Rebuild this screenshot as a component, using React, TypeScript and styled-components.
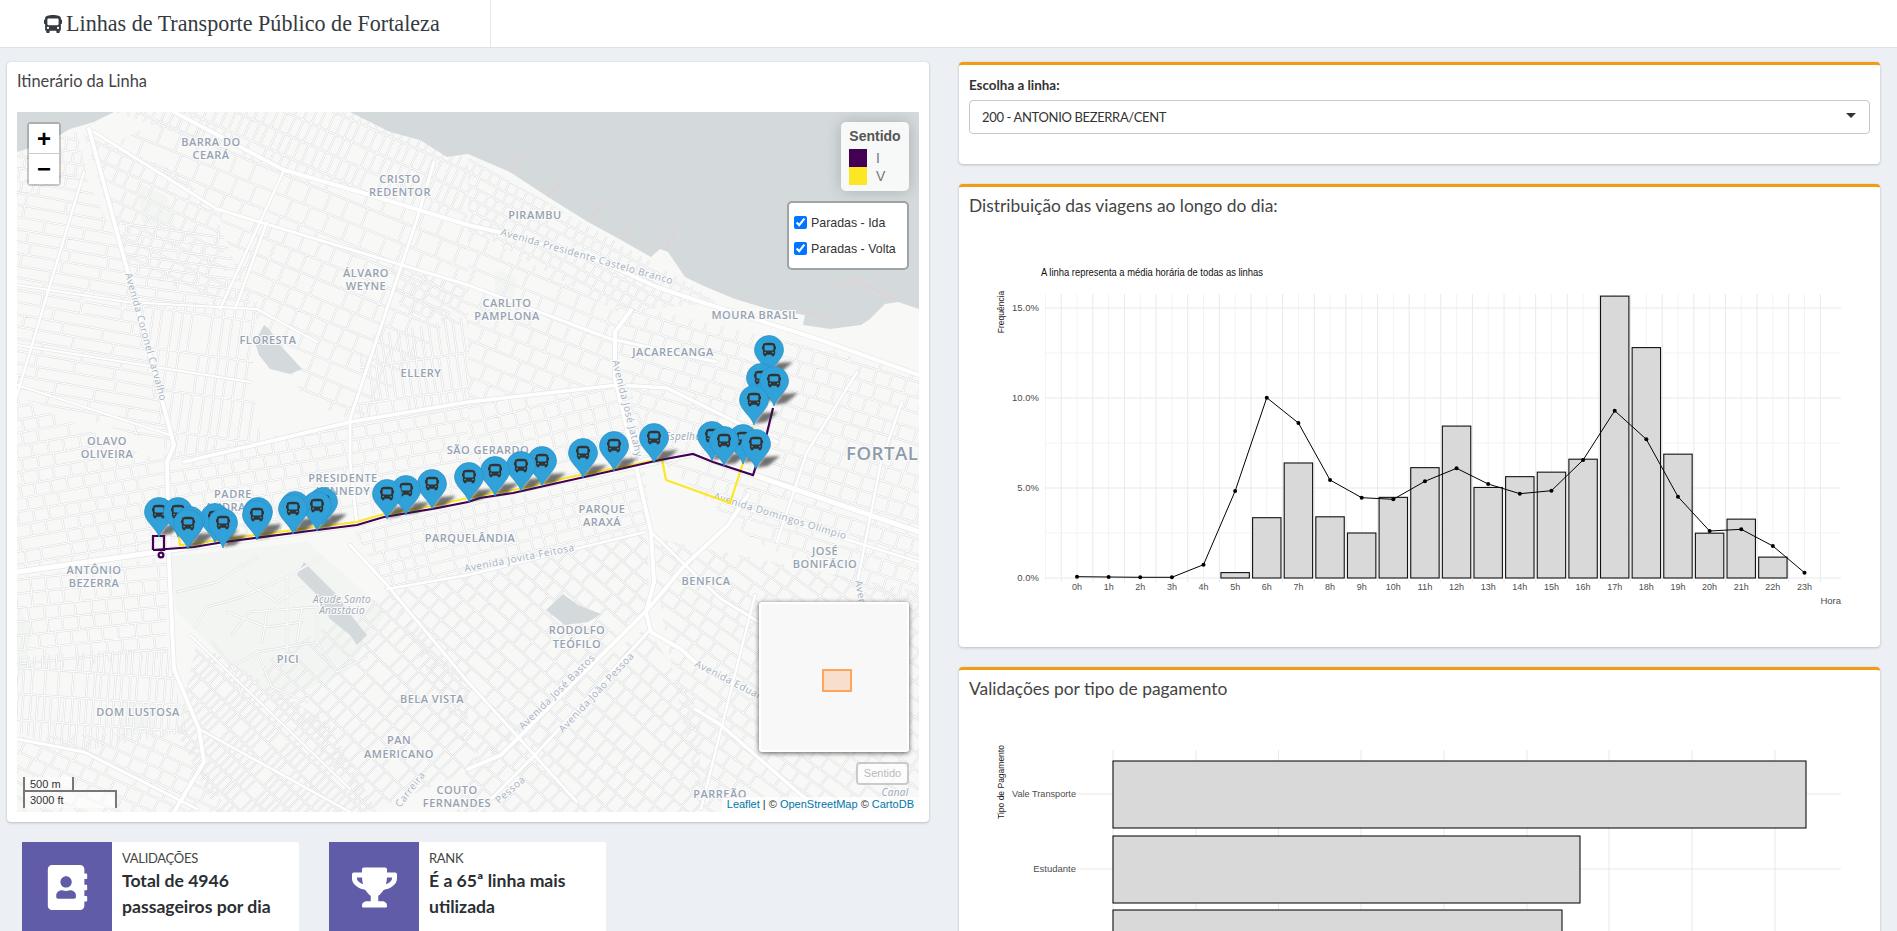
import styled, { createGlobalStyle } from "styled-components";
import { FaAddressBook, FaBus, FaTrophy } from "react-icons/fa";

type Pt = [number, number];

interface District {
  poly: Pt[];
  angle: number;
  sx: number;
  sy: number;
}

// bairros do mapa base: poligono, direcao das ruas e tamanho das quadras
const districts: District[] = [
  { poly: [[0, 40], [60, 20], [70, 60], [0, 85]], angle: 8, sx: 10, sy: 12 },
  { poly: [[0, 70], [67, 60], [112, 157], [155, 335], [0, 285]], angle: 10, sx: 40, sy: 12 },
  { poly: [[67, 20], [160, 60], [200, 100], [215, 190], [110, 160]], angle: 25, sx: 13, sy: 15 },
  { poly: [[105, 110], [205, 120], [235, 195], [110, 195]], angle: 8, sx: 30, sy: 10 },
  { poly: [[115, 190], [240, 190], [235, 270], [245, 330], [150, 345]], angle: 8, sx: 10, sy: 40 },
  { poly: [[97, 0], [333, 0], [451, 47], [451, 115], [267, 58], [157, 20]], angle: 24, sx: 9, sy: 20 },
  { poly: [[160, 0], [267, 58], [451, 115], [451, 175], [200, 97], [100, 30]], angle: 22, sx: 20, sy: 20 },
  { poly: [[200, 97], [451, 175], [400, 250], [340, 310], [290, 290], [230, 190]], angle: 22, sx: 17, sy: 18 },
  { poly: [[370, 150], [451, 175], [451, 215], [385, 200]], angle: 30, sx: 11, sy: 11 },
  { poly: [[345, 225], [451, 205], [451, 290], [338, 312]], angle: -8, sx: 8, sy: 36 },
  { poly: [[130, 345], [340, 310], [451, 290], [451, 385], [140, 440], [0, 460], [0, 285]], angle: -10, sx: 16, sy: 13 },
  { poly: [[451, 45], [660, 165], [700, 190], [600, 200], [451, 115]], angle: 28, sx: 10, sy: 11 },
  { poly: [[451, 115], [600, 200], [600, 270], [451, 290]], angle: 22, sx: 18, sy: 17 },
  { poly: [[451, 290], [610, 270], [640, 345], [451, 390]], angle: -14, sx: 15, sy: 15 },
  { poly: [[600, 190], [902, 260], [902, 500], [738, 430], [640, 345], [600, 270]], angle: 17, sx: 16, sy: 15 },
  { poly: [[0, 465], [150, 445], [150, 545], [0, 560]], angle: -6, sx: 16, sy: 14 },
  { poly: [[0, 545], [150, 535], [170, 620], [60, 640], [0, 620]], angle: 4, sx: 7, sy: 26 },
  { poly: [[0, 625], [170, 620], [210, 700], [0, 700]], angle: 24, sx: 16, sy: 14 },
  { poly: [[180, 530], [310, 610], [360, 700], [200, 700], [160, 620]], angle: 44, sx: 7, sy: 17 },
  { poly: [[240, 555], [370, 480], [451, 570], [451, 660], [350, 700]], angle: 44, sx: 11, sy: 19 },
  { poly: [[335, 415], [628, 360], [634, 420], [370, 478]], angle: -14, sx: 13, sy: 12 },
  { poly: [[370, 478], [630, 420], [632, 495], [484, 643], [451, 640]], angle: 42, sx: 15, sy: 15 },
  { poly: [[451, 650], [630, 515], [682, 600], [684, 700], [440, 700]], angle: 42, sx: 13, sy: 17 },
  { poly: [[632, 425], [902, 480], [902, 700], [684, 700], [650, 530]], angle: 36, sx: 16, sy: 14 },
];

const mulberry = (seed: number) => () => {
  seed = (seed + 0x6d2b79f5) | 0;
  let t = Math.imul(seed ^ (seed >>> 15), 1 | seed);
  t = (t + Math.imul(t ^ (t >>> 7), 61 | t)) ^ t;
  return ((t ^ (t >>> 14)) >>> 0) / 4294967296;
};

const streetPath = (d: District, seed: number) => {
  const rng = mulberry(seed);
  const xs = d.poly.map((p) => p[0]);
  const ys = d.poly.map((p) => p[1]);
  const [x0, x1, y0, y1] = [Math.min(...xs), Math.max(...xs), Math.min(...ys), Math.max(...ys)];
  const cx = (x0 + x1) / 2;
  const cy = (y0 + y1) / 2;
  const R = Math.hypot(x1 - x0, y1 - y0) / 2 + 4;
  const rad = (d.angle * Math.PI) / 180;
  const [ux, uy, vx, vy] = [Math.cos(rad), Math.sin(rad), -Math.sin(rad), Math.cos(rad)];
  const at = (u: number, v: number) =>
    `${(cx + ux * u + vx * v).toFixed(1)} ${(cy + uy * u + vy * v).toFixed(1)}`;
  let out = "";
  for (let v = -R; v < R; v += d.sy) {
    out += `M${at(-R, v)}L${at(R, v)}`;
    for (let u = -R + rng() * d.sx; u < R; u += d.sx) {
      if (rng() < 0.1) continue;
      const j = rng() * 2 - 1;
      out += `M${at(u + j, v)}L${at(u + j, v + d.sy)}`;
    }
  }
  return out;
};

const polyStr = (pts: Pt[]) => pts.map((p) => p.join(",")).join(" ");

const bigRoads: { w: number; pts: Pt[] }[] = [
  { w: 4, pts: [[157, 0], [267, 58], [353, 83], [451, 113], [490, 122], [585, 150], [640, 175], [684, 190], [801, 227], [902, 263]] },
  { w: 4, pts: [[72, 17], [110, 157], [157, 333], [150, 350], [152, 450], [157, 557], [182, 617], [187, 650], [157, 700]] },
  { w: 5, pts: [[0, 460], [140, 440], [333, 413], [451, 387], [563, 366], [676, 342], [902, 420]] },
  { w: 2.5, pts: [[67, 60], [0, 283]] },
  { w: 2.5, pts: [[267, 58], [203, 197]] },
  { w: 2.5, pts: [[250, 110], [218, 197]] },
  { w: 3, pts: [[417, 50], [400, 107], [333, 307], [333, 350], [340, 413]] },
  { w: 3, pts: [[77, 20], [200, 97], [451, 173], [594, 227], [700, 250]] },
  { w: 2, pts: [[0, 173], [110, 190], [240, 197], [300, 230]] },
  { w: 2, pts: [[0, 233], [233, 270]] },
  { w: 2, pts: [[0, 273], [153, 323]] },
  { w: 3.5, pts: [[167, 350], [333, 310], [451, 290], [601, 273], [650, 276], [760, 330]] },
  { w: 4, pts: [[614, 198], [598, 220], [598, 267], [618, 350], [634, 420], [637, 470], [629, 500], [634, 520], [664, 537], [678, 550], [738, 583]] },
  { w: 4, pts: [[451, 657], [484, 643], [631, 497], [668, 453], [711, 413], [731, 383]] },
  { w: 3, pts: [[631, 520], [518, 643], [461, 700]] },
  { w: 3, pts: [[634, 420], [668, 453], [704, 487], [742, 510]] },
  { w: 2.5, pts: [[696, 387], [838, 430], [902, 450]] },
  { w: 2.5, pts: [[370, 477], [451, 463], [628, 420]] },
  { w: 3, pts: [[333, 433], [370, 473], [451, 570], [560, 690]] },
  { w: 3.5, pts: [[678, 597], [704, 613], [784, 683], [810, 700]] },
  { w: 2.5, pts: [[738, 483], [684, 697]] },
  { w: 3, pts: [[0, 627], [67, 640], [180, 697]] },
  { w: 2.5, pts: [[182, 617], [333, 700]] },
  { w: 2, pts: [[173, 523], [333, 677]] },
  { w: 2.5, pts: [[885, 290], [864, 350], [841, 467]] },
  { w: 2.5, pts: [[840, 260], [790, 340], [760, 430]] },
];

// ruas internas do campus do Pici
const campusRoads: Pt[][] = [
  [[270, 465], [270, 540]],
  [[215, 522], [232, 500], [300, 495], [300, 530], [240, 540], [215, 555]],
  [[305, 445], [270, 465], [225, 485], [190, 495], [178, 515]],
  [[240, 540], [255, 575], [290, 590]],
  [[160, 480], [200, 470], [240, 445]],
  [[230, 470], [260, 490], [285, 475]],
  [[195, 530], [215, 555], [225, 585]],
  [[300, 530], [320, 560], [350, 545]],
  [[210, 500], [250, 515], [285, 510]],
  [[250, 500], [245, 530]],
  [[285, 495], [280, 530]],
];

const water: Pt[] = [
  [333, 0], [373, 20], [403, 28], [430, 45], [451, 42], [493, 60], [531, 85], [571, 110], [604, 128], [634, 145],
  [643, 137], [651, 140], [668, 165], [689, 175], [718, 187], [751, 197], [788, 203], [786, 213], [813, 217],
  [844, 213], [853, 207], [868, 192], [881, 190], [902, 197], [902, 0],
];

const lakes: Pt[][] = [
  [[0, 0], [97, 0], [77, 10], [53, 17], [43, 23], [10, 37], [0, 40]],
  [[247, 213], [252, 217], [263, 233], [285, 257], [273, 262], [253, 257], [242, 243], [238, 230]],
  [[287, 450], [300, 463], [320, 483], [337, 507], [350, 523], [340, 533], [333, 523], [313, 507], [300, 483], [280, 463]],
  [[546, 482], [561, 493], [584, 502], [571, 510], [548, 513], [529, 498]],
];

const parks: Pt[][] = [
  [[150, 445], [290, 430], [370, 500], [330, 560], [260, 590], [200, 540], [160, 500]],
  [[0, 490], [14, 520], [8, 560], [0, 570]],
  [[100, 590], [130, 590], [140, 620], [105, 625]],
  [[478, 158], [500, 165], [495, 195], [478, 190]],
  [[120, 70], [150, 85], [160, 120], [125, 110]],
];

const piers: [Pt, Pt][] = [
  [[493, 60], [504, 42]],
  [[531, 85], [543, 70]],
  [[573, 110], [586, 90]],
  [[606, 128], [614, 115]],
  [[649, 138], [659, 117]],
  [[821, 173], [833, 167]],
  [[833, 167], [881, 188]],
  [[790, 200], [812, 206]],
];

const placeLabels: [string, number, number][] = [
  ["BARRA DO", 194, 31], ["CEARÁ", 194, 44], ["CRISTO", 383, 68], ["REDENTOR", 383, 81],
  ["ÁLVARO", 349, 162], ["WEYNE", 349, 175], ["FLORESTA", 251, 229], ["ELLERY", 404, 262],
  ["OLAVO", 90, 330], ["OLIVEIRA", 90, 343], ["SÃO GERARDO", 471, 339], ["PIRAMBU", 518, 104],
  ["CARLITO", 490, 192], ["PAMPLONA", 490, 205], ["MOURA BRASIL", 738, 204], ["JACARECANGA", 656, 241],
  ["PADRE", 216, 383], ["ANDRADE", 216, 396], ["PRESIDENTE", 326, 367], ["KENNEDY", 326, 380],
  ["ANTÔNIO", 77, 459], ["BEZERRA", 77, 472], ["DOM LUSTOSA", 121, 601], ["PICI", 271, 548],
  ["BELA VISTA", 415, 588], ["PAN", 382, 629], ["AMERICANO", 382, 643], ["COUTO", 440, 679],
  ["FERNANDES", 440, 692], ["PARQUE", 585, 398], ["ARAXÁ", 585, 411], ["PARQUELÂNDIA", 453, 427],
  ["JOSÉ", 808, 440], ["BONIFÁCIO", 808, 453], ["BENFICA", 689, 470], ["RODOLFO", 560, 519],
  ["TEÓFILO", 560, 533], ["PARREÃO", 703, 683],
];

const roadLabels: [string, number, number, number][] = [
  ["Avenida Coronel Carvalho", 108, 162, 74.5],
  ["Avenida Presidente Castelo Branco", 483, 123, 16],
  ["Avenida José Jatahy", 595, 249, 76],
  ["Avenida Domingos Olímpio", 696, 387, 17],
  ["Avenida Jovita Feitosa", 448, 460, -11],
  ["Avenida José Bastos", 506, 618, -44.6],
  ["Avenida João Pessoa", 546, 621, -47],
  ["Avenida Eduardo Girão", 677, 554, 27],
  ["Pessoa", 482, 692, -41],
  ["Carreira", 383, 696, -52],
  ["Avenida", 838, 469, 80],
];

const lakeLabels: [string, number, number][] = [
  ["Açude Santo", 325, 491],
  ["Anastácio", 325, 502],
  ["Espelho", 666, 328],
  ["Canal", 878, 684],
];

const purple: Pt[] = [
  [136, 438], [163, 436], [177, 435], [207, 430], [300, 418], [340, 413], [367, 405], [415, 397], [451, 390],
  [463, 386], [496, 381], [563, 366], [643, 348], [676, 342], [696, 350], [736, 363], [750, 321], [756, 296],
];
const yellow: Pt[] = [
  [162, 425], [163, 433], [177, 432], [207, 427], [300, 415], [340, 410], [367, 402], [415, 394], [451, 386],
  [463, 383], [496, 378], [563, 363], [645, 347], [649, 368], [713, 391], [726, 351], [736, 315],
];

const pins: Pt[] = [
  [752, 263], [744, 291], [757, 294], [737, 313], [637, 351], [695, 349], [726, 352], [707, 354], [739, 357],
  [597, 359], [566, 366], [525, 374], [504, 379], [478, 384], [452, 390], [415, 397], [389, 403], [370, 407],
  [306, 415], [300, 419], [278, 419], [276, 422], [241, 425], [142, 425], [161, 425], [240, 428], [198, 431],
  [173, 434], [206, 436], [171, 437],
].sort((a, b) => a[1] - b[1]) as Pt[];

const hours = Array.from({ length: 24 }, (_, i) => i);
const hourX = (h: number) => 1077 + h * 31.63;
const pctY = (p: number) => 578 - p * 18;

const barValues: [number, number][] = [
  [5, 0.3], [6, 3.35], [7, 6.39], [8, 3.4], [9, 2.5], [10, 4.48], [11, 6.13], [12, 8.44], [13, 5.03],
  [14, 5.63], [15, 5.88], [16, 6.6], [17, 15.66], [18, 12.8], [19, 6.88], [20, 2.49], [21, 3.27], [22, 1.16],
];

const avgLine = [
  576.7, 577, 577.3, 577.3, 564.7, 491, 397.7, 423, 480, 497.7, 499.3, 481.3, 468.3, 484, 493.7, 490.7, 460,
  410.7, 439.3, 496.7, 531, 529.3, 546, 572.7,
];

const payGrid = [1113, 1196, 1278.5, 1361, 1444, 1527, 1609, 1692, 1775];

const GlobalStyle = createGlobalStyle`
  html, body {
    margin: 0;
    height: 100%;
    overflow: hidden;
    background: #ecf0f5;
    font-family: "Lato", "Liberation Sans", sans-serif;
    color: #333;
  }
  * {
    box-sizing: border-box;
  }
`;

const Header = styled.header`
  display: flex;
  height: 48px;
  background: #fff;
  border-bottom: 1px solid #dee2e6;
`;

const Brand = styled.div`
  display: flex;
  align-items: center;
  gap: 4px;
  width: 491px;
  padding-left: 44px;
  border-right: 1px solid #e6e8eb;
  font-family: "Liberation Serif", serif;
  font-size: 22.1px;
  color: #343a40;
`;

const Content = styled.main`
  display: grid;
  grid-template-columns: 922px 921px;
  column-gap: 30px;
  padding: 14px 0 0 7px;
`;

const Column = styled.div`
  display: flex;
  flex-direction: column;
  gap: 20px;
`;

const Card = styled.section<{ $accent?: boolean }>`
  background: #fff;
  border-radius: 4px;
  border-top: ${({ $accent }) => ($accent ? "3px solid #f39c12" : "none")};
  box-shadow: 0 0 1px rgba(0, 0, 0, 0.125), 0 1px 3px rgba(0, 0, 0, 0.2);
`;

const MapCard = styled(Card)`
  padding: 6px 10px 10px;
`;

const MapTitle = styled.h3`
  margin: 0 0 18px;
  font-size: 16.4px;
  line-height: 26px;
  font-weight: 400;
  color: #444;
`;

const MapFrame = styled.div`
  position: relative;
  height: 700px;
  overflow: hidden;
  background: #f8f8f7;
`;

const MapCanvas = styled.svg`
  display: block;
`;

const PlaceText = styled.text`
  font-family: "Open Sans", "Liberation Sans", sans-serif;
  font-size: 11px;
  font-weight: 600;
  letter-spacing: 0.5px;
  text-anchor: middle;
  dominant-baseline: middle;
  fill: #95a2b1;
  stroke: #fbfbfb;
  stroke-width: 2px;
  paint-order: stroke;
`;

const CityText = styled(PlaceText)`
  font-size: 18.6px;
  letter-spacing: 0.5px;
  text-anchor: start;
  fill: #8d9bab;
`;

const RoadText = styled.text`
  font-family: "Open Sans", "Liberation Sans", sans-serif;
  font-size: 10px;
  letter-spacing: 0.5px;
  fill: #a4b0bd;
  stroke: #fbfbfb;
  stroke-width: 2px;
  paint-order: stroke;
`;

const LakeText = styled(RoadText)`
  font-style: italic;
  text-anchor: middle;
  letter-spacing: 0.3px;
  fill: #9aa7b5;
`;

const ZoomBar = styled.div`
  position: absolute;
  top: 10px;
  left: 10px;
  display: flex;
  flex-direction: column;
  border: 2px solid rgba(0, 0, 0, 0.2);
  border-radius: 4px;
  background-clip: padding-box;
`;

const ZoomButton = styled.div<{ $first?: boolean }>`
  width: 30px;
  height: 30px;
  background: #fff;
  border-bottom: ${({ $first }) => ($first ? "1px solid #ccc" : "none")};
  font-family: "Liberation Sans", sans-serif;
  font-size: 24px;
  font-weight: 700;
  line-height: 29px;
  text-align: center;
  color: #000;
`;

const Legend = styled.div`
  position: absolute;
  top: 10px;
  right: 10px;
  width: 68px;
  height: 69px;
  padding: 6px 8px;
  border-radius: 5px;
  background: rgba(255, 255, 255, 0.8);
  box-shadow: 0 0 15px rgba(0, 0, 0, 0.2);
  font-family: "Liberation Sans", sans-serif;
  color: #777;
`;

const LegendTitle = styled.div`
  margin: 0 -4px 5px;
  font-size: 14px;
  line-height: 16px;
  font-weight: 700;
  text-align: center;
  color: #555;
`;

const LegendRow = styled.div`
  display: flex;
  align-items: center;
  gap: 9px;
  height: 18px;
  font-size: 14px;
`;

const LegendSwatch = styled.span<{ $color: string }>`
  width: 18px;
  height: 18px;
  background: ${({ $color }) => $color};
`;

const LayerBox = styled.div`
  position: absolute;
  top: 89px;
  right: 10px;
  display: flex;
  flex-direction: column;
  gap: 9px;
  width: 122px;
  height: 69px;
  padding: 11px 5px;
  border: 2px solid rgba(0, 0, 0, 0.25);
  border-radius: 5px;
  background: #fff;
  background-clip: padding-box;
  font-family: "Liberation Sans", sans-serif;
  font-size: 12.4px;
  color: #333;
`;

const LayerItem = styled.label`
  display: flex;
  align-items: center;
  gap: 4px;
  height: 18px;
`;

const LayerCheck = styled.input`
  width: 13px;
  height: 13px;
  margin: 0;
`;

const MiniMap = styled.div`
  position: absolute;
  top: 490px;
  right: 10px;
  width: 150px;
  height: 150px;
  border: 2px solid #fff;
  border-radius: 3px;
  background: #f8f8f8;
  box-shadow: 0 1px 5px rgba(0, 0, 0, 0.65);
`;

const MiniRect = styled.div`
  position: absolute;
  top: 65px;
  left: 61px;
  width: 30px;
  height: 23px;
  border: 2px solid #ffa45c;
  border-radius: 1px;
  background: #f8dfcb;
`;

const GhostToggle = styled.div`
  position: absolute;
  top: 650px;
  right: 10px;
  width: 53px;
  height: 23px;
  border: 2px solid rgba(0, 0, 0, 0.2);
  border-radius: 4px;
  background: rgba(255, 255, 255, 0.7);
  font-family: "Liberation Sans", sans-serif;
  font-size: 11px;
  line-height: 19px;
  text-align: center;
  color: #bbb;
`;

const Attribution = styled.div`
  position: absolute;
  right: 0;
  bottom: 0;
  padding: 0 5px;
  background: rgba(255, 255, 255, 0.7);
  font-family: "Liberation Sans", sans-serif;
  font-size: 11px;
  line-height: 15px;
  color: #333;
`;

const AttrLink = styled.span`
  color: #0078a8;
`;

const Scale = styled.div`
  position: absolute;
  left: 6px;
  bottom: 4px;
  font-family: "Liberation Sans", sans-serif;
  font-size: 11px;
  line-height: 13px;
  color: #333;
`;

const ScaleTop = styled.div`
  width: 51px;
  height: 15px;
  padding: 1px 5px 0;
  border: 2px solid #777;
  border-top: none;
  background: rgba(255, 255, 255, 0.5);
`;

const ScaleBottom = styled.div`
  width: 94px;
  height: 18px;
  padding: 2px 5px 0;
  border: 2px solid #777;
  border-bottom: none;
  margin-top: -2px;
  background: rgba(255, 255, 255, 0.5);
`;

const InfoRow = styled.div`
  display: flex;
  gap: 30px;
  padding-left: 15px;
`;

const InfoBox = styled.div`
  display: flex;
  width: 277px;
  min-height: 110px;
  background: #fff;
  border-radius: 2px;
`;

const InfoIcon = styled.div`
  display: flex;
  align-items: center;
  justify-content: center;
  flex: 0 0 90px;
  padding-bottom: 20px;
  background: #605ca8;
  font-size: 45px;
  color: #fff;
`;

const InfoBody = styled.div`
  padding: 6px 10px;
`;

const InfoLabel = styled.div`
  font-size: 13px;
  line-height: 20px;
  letter-spacing: -0.3px;
  color: #444;
`;

const InfoValue = styled.div`
  font-size: 17.6px;
  line-height: 25.5px;
  font-weight: 700;
  color: #2b2f33;
`;

const SelectCard = styled(Card)`
  padding: 10px 10px 30px;
`;

const FieldLabel = styled.label`
  display: block;
  margin-bottom: 5px;
  font-size: 13.4px;
  line-height: 20px;
  font-weight: 700;
  color: #333;
`;

const SelectBox = styled.div`
  display: flex;
  align-items: center;
  justify-content: space-between;
  height: 34px;
  padding: 0 13px 0 12px;
  border: 1px solid #c8c8c8;
  border-radius: 4px;
  background: #fff;
  font-size: 13px;
  letter-spacing: -0.35px;
  color: #333;
`;

const SelectArrow = styled.span`
  width: 0;
  height: 0;
  margin-bottom: 3px;
  border-style: solid;
  border-width: 5px 5px 0;
  border-color: #333 transparent transparent;
`;

const ChartTitle = styled.h3`
  margin: 0;
  padding: 6px 10px 9px;
  font-size: 17.4px;
  line-height: 26px;
  font-weight: 400;
  color: #444;
`;

const ChartSvg = styled.svg`
  display: block;
  font-family: "Liberation Sans", sans-serif;
`;

const Tick = styled.text<{ $anchor?: string }>`
  font-size: 9.5px;
  fill: #4d4d4d;
  text-anchor: ${({ $anchor }) => $anchor || "middle"};
  dominant-baseline: middle;
`;

const AxisTitle = styled.text`
  font-size: 8.5px;
  fill: #222;
  text-anchor: middle;
  dominant-baseline: middle;
`;

const Bar = styled.rect`
  fill: #d9d9d9;
  stroke: #111;
  stroke-width: 1.1px;
`;

const MajorGrid = styled.line`
  stroke: #e9e9e9;
  stroke-width: 1px;
`;

const MinorGrid = styled.line`
  stroke: #f3f3f3;
  stroke-width: 1px;
`;

const Pin = ({ x, y }: { x: number; y: number }) => (
  <g transform={`translate(${x} ${y})`}>
    <path
      d="M0 0C-2.5-9-14.5-15.5-14.5-25A14.5 14.5 0 1 1 14.5-25C14.5-15.5 2.5-9 0 0Z"
      fill="#31a1d9"
      stroke="#2b90c6"
      strokeWidth="0.7"
    />
    <FaBus x={-7} y={-32.5} size={14} color="#333" />
  </g>
);

const BaseMap = () => (
  <MapCanvas width="902" height="700" viewBox="0 0 902 700">
    <defs>
      {districts.map((d, i) => (
        <clipPath id={`bairro-${i}`} key={i}>
          <polygon points={polyStr(d.poly)} />
        </clipPath>
      ))}
      <filter id="pin-shadow" x="-50%" y="-50%" width="200%" height="200%">
        <feGaussianBlur stdDeviation="1.6" />
      </filter>
    </defs>
    <rect width="902" height="700" fill="#f8f8f7" />
    {parks.map((p, i) => (
      <polygon key={i} points={polyStr(p)} fill="#f3f5f2" />
    ))}
    {districts.map((d, i) => {
      const path = streetPath(d, i * 97 + 11);
      return (
        <g key={i} clipPath={`url(#bairro-${i})`} fill="none">
          <path d={path} stroke="#dfe0e2" strokeWidth="2.2" />
          <path d={path} stroke="#fff" strokeWidth="1" />
        </g>
      );
    })}
    <polygon points={polyStr(water)} fill="#d4dadc" />
    {lakes.map((p, i) => (
      <polygon key={i} points={polyStr(p)} fill="#d4dadc" />
    ))}
    {piers.map(([a, b], i) => (
      <line key={i} x1={a[0]} y1={a[1]} x2={b[0]} y2={b[1]} stroke="#eec9c9" strokeWidth="1.6" strokeDasharray="2 1.5" />
    ))}
    <g fill="none" strokeLinejoin="round" strokeLinecap="round">
      {campusRoads.map((r, i) => (
        <polyline key={i} points={polyStr(r)} stroke="#e0e1e2" strokeWidth="2.4" />
      ))}
      {campusRoads.map((r, i) => (
        <polyline key={i} points={polyStr(r)} stroke="#fff" strokeWidth="1.2" />
      ))}
      {bigRoads.map((r, i) => (
        <polyline key={i} points={polyStr(r.pts)} stroke="#e6e7e8" strokeWidth={r.w + 1.4} />
      ))}
      {bigRoads.map((r, i) => (
        <polyline key={i} points={polyStr(r.pts)} stroke="#fff" strokeWidth={r.w} />
      ))}
    </g>
    {placeLabels.map(([t, x, y]) => (
      <PlaceText key={t} x={x} y={y}>
        {t}
      </PlaceText>
    ))}
    <CityText x="829" y="343">
      FORTALEZA
    </CityText>
    {roadLabels.map(([t, x, y, a]) => (
      <RoadText key={t} transform={`translate(${x} ${y}) rotate(${a})`}>
        {t}
      </RoadText>
    ))}
    {lakeLabels.map(([t, x, y]) => (
      <LakeText key={t} x={x} y={y}>
        {t}
      </LakeText>
    ))}
    <g fill="none" strokeWidth="2.2" strokeLinejoin="miter">
      <polyline points={polyStr(yellow)} stroke="#fde725" />
      <polyline points={polyStr(purple)} stroke="#440154" />
      <polyline points="136,438 136,424 147,424 147,438 136,438" stroke="#440154" />
      <circle cx="144" cy="443" r="2.4" stroke="#440154" />
    </g>
    <g filter="url(#pin-shadow)" fill="#2b2b2b" opacity="0.65">
      {pins.map(([x, y], i) => (
        <polygon key={i} points={`${x},${y - 1} ${x + 8},${y - 12} ${x + 24},${y - 13} ${x + 12},${y - 3}`} />
      ))}
    </g>
    {pins.map(([x, y], i) => (
      <Pin key={i} x={x} y={y} />
    ))}
  </MapCanvas>
);

const HourChart = () => (
  <ChartSvg width="921" height="419" viewBox="959 228 921 419">
    {Array.from({ length: 50 }, (_, i) => 1045.4 + i * 15.815).map((x, i) =>
      i % 2 === 0 ? (
        <MinorGrid key={i} x1={x} x2={x} y1={294} y2={582} />
      ) : (
        <MajorGrid key={i} x1={x} x2={x} y1={294} y2={582} />
      )
    )}
    {[12.5, 7.5, 2.5].map((p) => (
      <MinorGrid key={p} x1={1045} x2={1841} y1={pctY(p)} y2={pctY(p)} />
    ))}
    {[15, 10, 5, 0].map((p) => (
      <MajorGrid key={p} x1={1045} x2={1841} y1={pctY(p)} y2={pctY(p)} />
    ))}
    {barValues.map(([h, v]) => (
      <Bar key={h} x={hourX(h) - 14.2} width={28.4} y={pctY(v)} height={v * 18} />
    ))}
    <polyline
      points={avgLine.map((y, h) => `${hourX(h)},${y}`).join(" ")}
      fill="none"
      stroke="#000"
      strokeWidth="1"
    />
    {avgLine.map((y, h) => (
      <circle key={h} cx={hourX(h)} cy={y} r="2" fill="#000" />
    ))}
    <text x="1041" y="276" fontSize="11" fill="#111" textLength="222" lengthAdjust="spacingAndGlyphs">
      A linha representa a média horária de todas as linhas
    </text>
    <AxisTitle transform="translate(1002 312) rotate(-90)">Frequência</AxisTitle>
    {[15, 10, 5, 0].map((p) => (
      <Tick key={p} $anchor="end" x="1039" y={pctY(p)}>
        {p.toFixed(1)}%
      </Tick>
    ))}
    {hours.map((h) => (
      <Tick key={h} x={hourX(h)} y="587" textLength={h > 9 ? 15 : 10} lengthAdjust="spacingAndGlyphs">
        {h}h
      </Tick>
    ))}
    <Tick $anchor="end" x="1841" y="601" fill="#111">
      Hora
    </Tick>
  </ChartSvg>
);

const PaymentChart = () => (
  <ChartSvg width="921" height="330" viewBox="959 711 921 330">
    {payGrid.map((x) => (
      <MajorGrid key={x} x1={x} x2={x} y1={750} y2={1041} />
    ))}
    {[794, 869].map((y) => (
      <MajorGrid key={y} x1={1079} x2={1841} y1={y} y2={y} />
    ))}
    <Bar x={1113} y={761} width={693} height={67} />
    <Bar x={1113} y={836} width={467} height={67} />
    <Bar x={1113} y={910} width={449} height={67} />
    <AxisTitle transform="translate(1002 782) rotate(-90)">Tipo de Pagamento</AxisTitle>
    <Tick $anchor="end" x="1076" y="794" textLength="64" lengthAdjust="spacingAndGlyphs">
      Vale Transporte
    </Tick>
    <Tick $anchor="end" x="1076" y="869">
      Estudante
    </Tick>
  </ChartSvg>
);

const App = () => {
  return (
    <>
      <GlobalStyle />
      <Header>
        <Brand>
          <FaBus size={18} />
          Linhas de Transporte Público de Fortaleza
        </Brand>
      </Header>
      <Content>
        <Column>
          <MapCard>
            <MapTitle>Itinerário da Linha</MapTitle>
            <MapFrame>
              <BaseMap />
              <ZoomBar>
                <ZoomButton $first>+</ZoomButton>
                <ZoomButton>−</ZoomButton>
              </ZoomBar>
              <Legend>
                <LegendTitle>Sentido</LegendTitle>
                <LegendRow>
                  <LegendSwatch $color="#440154" />I
                </LegendRow>
                <LegendRow>
                  <LegendSwatch $color="#fde725" />V
                </LegendRow>
              </Legend>
              <LayerBox>
                <LayerItem>
                  <LayerCheck type="checkbox" defaultChecked />
                  Paradas - Ida
                </LayerItem>
                <LayerItem>
                  <LayerCheck type="checkbox" defaultChecked />
                  Paradas - Volta
                </LayerItem>
              </LayerBox>
              <MiniMap>
                <MiniRect />
              </MiniMap>
              <GhostToggle>Sentido</GhostToggle>
              <Scale>
                <ScaleTop>500 m</ScaleTop>
                <ScaleBottom>3000 ft</ScaleBottom>
              </Scale>
              <Attribution>
                <AttrLink>Leaflet</AttrLink> | © <AttrLink>OpenStreetMap</AttrLink> © <AttrLink>CartoDB</AttrLink>
              </Attribution>
            </MapFrame>
          </MapCard>
          <InfoRow>
            <InfoBox>
              <InfoIcon>
                <FaAddressBook />
              </InfoIcon>
              <InfoBody>
                <InfoLabel>VALIDAÇÕES</InfoLabel>
                <InfoValue>Total de 4946 passageiros por dia</InfoValue>
              </InfoBody>
            </InfoBox>
            <InfoBox>
              <InfoIcon>
                <FaTrophy />
              </InfoIcon>
              <InfoBody>
                <InfoLabel>RANK</InfoLabel>
                <InfoValue>É a 65ª linha mais utilizada</InfoValue>
              </InfoBody>
            </InfoBox>
          </InfoRow>
        </Column>
        <Column>
          <SelectCard $accent>
            <FieldLabel>Escolha a linha:</FieldLabel>
            <SelectBox>
              200 - ANTONIO BEZERRA/CENT
              <SelectArrow />
            </SelectBox>
          </SelectCard>
          <Card $accent>
            <ChartTitle>Distribuição das viagens ao longo do dia:</ChartTitle>
            <HourChart />
          </Card>
          <Card $accent>
            <ChartTitle>Validações por tipo de pagamento</ChartTitle>
            <PaymentChart />
          </Card>
        </Column>
      </Content>
    </>
  );
};

export default App;
